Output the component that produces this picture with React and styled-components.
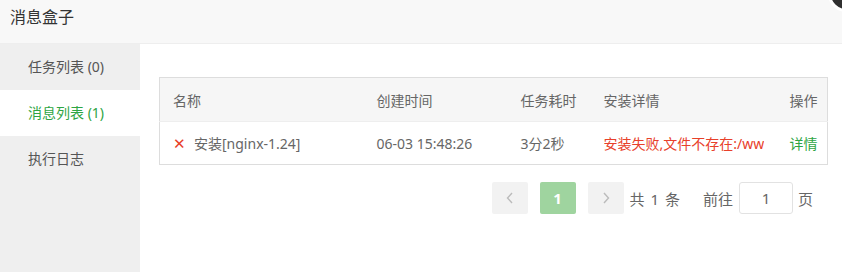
import React from 'react';
import styled, { createGlobalStyle } from 'styled-components';

const GlobalStyle = createGlobalStyle`
  html, body {
    margin: 0;
    padding: 0;
    background: #fff;
  }
  body {
    font-family: "Noto Sans", "Noto Sans CJK SC", sans-serif;
    overflow: hidden;
  }
`;

const Layer = styled.div`
  position: relative;
  width: 842px;
  height: 272px;
  display: flex;
  flex-flow: column;
  overflow: hidden;
  background: #fff;
`;

const TitleBar = styled.div`
  height: 44px;
  flex: none;
  box-sizing: border-box;
  padding: 6px 0 0 10px;
  background: #f8f8f8;
  border-bottom: 1px solid #eee;
  font-size: 16px;
  line-height: 22px;
  color: #333;
`;

const CloseDot = styled.span`
  position: absolute;
  top: -24px;
  right: -22px;
  width: 30px;
  height: 30px;
  border-radius: 50%;
  background: #2f2f2f;
  border: 3px solid #fff;
`;

const Body = styled.div`
  flex: 1;
  display: flex;
  flex-flow: row;
  min-height: 0;
`;

const Side = styled.div`
  width: 140px;
  flex: none;
  background: #efefef;
`;

const NavItem = styled.div`
  height: 46px;
  line-height: 46px;
  padding-left: 28px;
  font-size: 14px;
  color: ${p => (p.active ? '#2ea543' : '#555')};
  background: ${p => (p.active ? '#fff' : 'transparent')};
`;

const Content = styled.div`
  flex: 1;
  padding: 33px 14px 0 19px;
  display: flex;
  flex-flow: column;
`;

const Table = styled.table`
  width: 100%;
  table-layout: fixed;
  border-collapse: collapse;
  border: 1px solid #ddd;
  font-size: 14px;
  color: #666;
`;

const Th = styled.th`
  height: 43px;
  padding: 0 13px;
  background: #f6f6f6;
  border-bottom: 1px solid #eee;
  font-weight: normal;
  text-align: ${p => p.align || 'left'};
  white-space: nowrap;
`;

const Td = styled.td`
  height: 42px;
  padding: 0 13px;
  text-align: ${p => p.align || 'left'};
  white-space: nowrap;
  overflow: hidden;
  color: ${p => p.color || '#666'};
`;

const Clip = styled.div`
  overflow: hidden;
  white-space: nowrap;
`;

const Fail = styled.span`
  color: #e8402a;
  margin-right: 8px;
  font-size: 15px;
`;

const Link = styled.a`
  color: #2ea543;
  text-decoration: none;
`;

const Pager = styled.div`
  display: flex;
  align-items: center;
  justify-content: flex-end;
  margin-top: 17px;
  padding-right: 15px;
  font-size: 15px;
  color: #666;
`;

const PageBtn = styled.span`
  width: 36px;
  height: 32px;
  border-radius: 2px;
  display: flex;
  align-items: center;
  justify-content: center;
  margin-right: ${p => p.gap ?? 12}px;
  background: ${p => (p.active ? '#9fd49f' : '#f2f2f2')};
  color: ${p => (p.active ? '#fff' : '#bbb')};
  font-weight: ${p => (p.active ? 'bold' : 'normal')};
  font-size: 15px;
`;

const Label = styled.span`
  white-space: pre;
  word-spacing: ${p => p.spread || 0}px;
  margin-right: ${p => p.gap || 0}px;
`;

const PageInput = styled.span`
  width: 52px;
  height: 30px;
  border: 1px solid #e2e2e2;
  border-radius: 3px;
  display: flex;
  align-items: center;
  justify-content: center;
  margin: 0 5px 0 6px;
  color: #666;
`;

const Chevron = ({ dir }) => (
  <svg width="8" height="12" viewBox="0 0 8 12">
    <path
      d={dir === 'left' ? 'M6 1 L1.5 6 L6 11' : 'M2 1 L6.5 6 L2 11'}
      fill="none"
      stroke="#bbb"
      strokeWidth="1.4"
    />
  </svg>
);

const App = () => (
  <Layer>
    <GlobalStyle />
    <TitleBar>消息盒子</TitleBar>
    <CloseDot />
    <Body>
      <Side>
        <NavItem>任务列表 (0)</NavItem>
        <NavItem active>消息列表 (1)</NavItem>
        <NavItem>执行日志</NavItem>
      </Side>
      <Content>
        <Table>
          <colgroup>
            <col style={{ width: 204 }} />
            <col style={{ width: 144 }} />
            <col style={{ width: 83 }} />
            <col style={{ width: 186 }} />
            <col />
          </colgroup>
          <thead>
            <tr>
              <Th>名称</Th>
              <Th>创建时间</Th>
              <Th>任务耗时</Th>
              <Th>安装详情</Th>
              <Th align="right">操作</Th>
            </tr>
          </thead>
          <tbody>
            <tr>
              <Td><Fail>✕</Fail>安装[nginx-1.24]</Td>
              <Td>06-03 15:48:26</Td>
              <Td>3分2秒</Td>
              <Td color="#e8402a">
                <Clip>安装失败,文件不存在:/www/server/panel/install/nginx.sh</Clip>
              </Td>
              <Td align="right"><Link href="#">详情</Link></Td>
            </tr>
          </tbody>
        </Table>
        <Pager>
          <PageBtn><Chevron dir="left" /></PageBtn>
          <PageBtn active>1</PageBtn>
          <PageBtn gap={6}><Chevron dir="right" /></PageBtn>
          <Label gap={23} spread={2}>共 1 条</Label>
          <Label>前往</Label>
          <PageInput>1</PageInput>
          <Label>页</Label>
        </Pager>
      </Content>
    </Body>
  </Layer>
);

export default App;
